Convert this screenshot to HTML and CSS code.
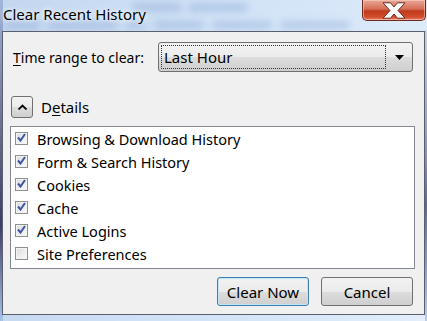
FILE: index.html
```html
<!DOCTYPE html>
<html>
<head>
<meta charset="utf-8">
<link rel="stylesheet" href="styles.css">
</head>
<body>
<div class="window">
  <div class="titlebar">
    <div class="glass">
      <span class="blob" style="left:130px;top:3px;width:50px;height:9px"></span>
      <span class="blob" style="left:186px;top:3px;width:60px;height:9px"></span>
      <span class="blob" style="left:2px;top:21px;width:36px;height:8px"></span>
      <span class="blob" style="left:46px;top:21px;width:70px;height:8px"></span>
      <span class="blob" style="left:124px;top:21px;width:20px;height:8px"></span>
      <span class="blob" style="left:152px;top:21px;width:50px;height:8px"></span>
      <span class="blob" style="left:210px;top:21px;width:60px;height:8px"></span>
      <span class="blob" style="left:278px;top:21px;width:70px;height:8px"></span>
    </div>
    <span class="title">Clear Recent History</span>
    <div class="close" aria-label="Close">
      <svg width="28" height="17" viewBox="0 0 28 17">
        <path d="M3 0.8 L10.5 0.8 L14 5 L17.5 0.8 L25 0.8 L18 8.5 L25 16.2 L17.5 16.2 L14 12 L10.5 16.2 L3 16.2 L10 8.5 Z" fill="#fbfbfb" stroke="#5e2015" stroke-width="0.9" stroke-linejoin="round"/>
      </svg>
    </div>
  </div>
  <div class="content">
    <div class="range-row">
      <span class="label"><u>T</u>ime range to clear:</span>
      <div class="select">
        <span class="select-value">Last Hour</span>
        <span class="select-arrow">
          <svg width="9" height="5" viewBox="0 0 9 5"><path d="M0 0 H9 L4.5 5 Z" fill="#000"/></svg>
        </span>
      </div>
    </div>
    <div class="details-row">
      <div class="toggle">
        <svg width="9" height="6" viewBox="0 0 9 6"><path d="M0.5 5.5 L4.5 1.5 L8.5 5.5" fill="none" stroke="#000" stroke-width="1.8"/></svg>
      </div>
      <span class="details-label">D<u>e</u>tails</span>
    </div>
    <div class="list">
      <div class="item"><span class="cb checked"></span>Browsing &amp; Download History</div>
      <div class="item"><span class="cb checked"></span>Form &amp; Search History</div>
      <div class="item"><span class="cb checked"></span>Cookies</div>
      <div class="item"><span class="cb checked"></span>Cache</div>
      <div class="item"><span class="cb checked"></span>Active Logins</div>
      <div class="item"><span class="cb"></span>Site Preferences</div>
    </div>
    <div class="buttons">
      <button class="btn default">Clear Now</button>
      <button class="btn">Cancel</button>
    </div>
  </div>
</div>
</body>
</html>
```
FILE: styles.css
```css
html, body {
  margin: 0;
  padding: 0;
}
body {
  width: 427px;
  height: 321px;
  overflow: hidden;
  font-family: "Segoe UI", "Noto Sans", "Open Sans", sans-serif;
  font-size: 14px;
  color: #000;
}
.window {
  box-sizing: border-box;
  width: 427px;
  height: 321px;
  display: flex;
  flex-direction: column;
  padding: 0 2px 6px 2px;
  background: linear-gradient(100deg, #c2d6ef 0%, #cfe1f6 40%, #d8e8f9 75%, #e3eefa 100%);
  position: relative;
  overflow: hidden;
}
.window::before {
  content: "";
  position: absolute;
  left: 0; top: 0; bottom: 0;
  width: 3px;
  background: linear-gradient(180deg, #9fb7da, #6d6d8f 40%, #3c3c6a 70%, #a9c3e6);
}
.window::after {
  content: "";
  position: absolute;
  right: 0; top: 30px; bottom: 0;
  width: 2px;
  background: linear-gradient(180deg, #c7cfe4, #8f98b8 40%, #5a6a92 60%, #b5cdea);
}
.titlebar {
  height: 31px;
  display: flex;
  align-items: flex-start;
  justify-content: space-between;
  position: relative;
}
.glass {
  position: absolute;
  left: 0; top: 0; right: 60px; bottom: 0;
  overflow: hidden;
  pointer-events: none;
}
.blob {
  position: absolute;
  background: #6f8fc6;
  opacity: 0.3;
  border-radius: 4px;
  filter: blur(3.5px);
}
.title {
  position: relative;
  margin-left: 1px;
  margin-top: 4px;
  font-size: 15px;
  color: #000;
  text-shadow: 0 0 8px rgba(255,255,255,0.9), 0 0 4px rgba(255,255,255,0.9);
}
.close {
  position: relative;
  width: 64px;
  height: 21px;
  box-sizing: border-box;
  margin-right: -1px;
  border: 1px solid #6b2a1e;
  border-top: none;
  border-radius: 0 0 5px 5px;
  background: linear-gradient(180deg, #e8a797 0%, #d56e56 45%, #c03a1d 55%, #d14e2b 85%, #e7806a 100%);
  box-shadow: inset 0 0 0 1px rgba(255,220,210,0.5);
  display: flex;
  align-items: center;
  justify-content: center;
}
.content {
  flex: 1;
  background: #f0f0f0;
  border: 1px solid #5a5f6b;
  display: flex;
  flex-direction: column;
  position: relative;
  z-index: 1;
}
.range-row {
  display: flex;
  align-items: center;
  margin-top: 10px;
  padding-left: 10px;
}
.label {
  width: 145px;
}
.label u, .details-label u {
  text-decoration-thickness: 1px;
  text-underline-offset: 2px;
}
.select {
  box-sizing: border-box;
  width: 255px;
  height: 30px;
  border: 1px solid #707070;
  border-radius: 3px;
  background: linear-gradient(180deg, #f2f2f2 0%, #ebebeb 50%, #dddddd 51%, #cfcfcf 100%);
  display: flex;
  align-items: center;
  padding: 2px;
}
.select-value {
  flex: 0 0 225px;
  box-sizing: border-box;
  height: 24px;
  border: 1px dotted #333;
  padding-left: 2px;
  line-height: 22px;
  font-size: 15px;
}
.select-arrow {
  flex: 1;
  display: flex;
  justify-content: center;
  align-items: center;
  padding-left: 2px;
}
.details-row {
  display: flex;
  align-items: center;
  margin-top: 24px;
  padding-left: 8px;
}
.toggle {
  box-sizing: border-box;
  width: 22px;
  height: 22px;
  border: 1px solid #707070;
  border-radius: 3px;
  background: linear-gradient(180deg, #f2f2f2 0%, #ebebeb 50%, #dddddd 51%, #cfcfcf 100%);
  display: flex;
  align-items: center;
  justify-content: center;
}
.details-label {
  margin-left: 8px;
  font-size: 15px;
}
.list {
  box-sizing: border-box;
  margin: 8px 9px 0 7px;
  height: 143px;
  background: #fff;
  border: 1px solid #828790;
  padding-top: 0;
}
.item {
  height: 23px;
  display: flex;
  align-items: center;
  padding-left: 4px;
  font-size: 14.5px;
}
.cb {
  box-sizing: border-box;
  width: 13px;
  height: 13px;
  border: 1px solid #8e8f8f;
  background: linear-gradient(135deg, #dcdcdc, #fafafa);
  box-shadow: inset 0 0 0 1px #f4f4f4;
  margin-right: 9px;
  position: relative;
}
.cb.checked::after {
  content: "";
  position: absolute;
  left: 1px;
  top: 0;
  width: 9px;
  height: 9px;
  background: no-repeat center / 9px 9px url("data:image/svg+xml,%3Csvg xmlns='http://www.w3.org/2000/svg' viewBox='0 0 9 9'%3E%3Cpath d='M1 4.5 L3.5 7.5 L8 1' fill='none' stroke='%233d56a0' stroke-width='2'/%3E%3C/svg%3E");
}
.buttons {
  display: flex;
  justify-content: flex-end;
  gap: 12px;
  margin-top: 8px;
  padding-right: 11px;
}
.btn {
  box-sizing: border-box;
  width: 92px;
  height: 29px;
  border: 1px solid #707070;
  border-radius: 3px;
  background: linear-gradient(180deg, #f2f2f2 0%, #ebebeb 50%, #dddddd 51%, #cfcfcf 100%);
  font-family: inherit;
  font-size: 15px;
  color: #000;
  padding: 0;
}
.btn.default {
  border-color: #3c7fb1;
  box-shadow: inset 0 0 0 1px #bfe6f8;
}
```
